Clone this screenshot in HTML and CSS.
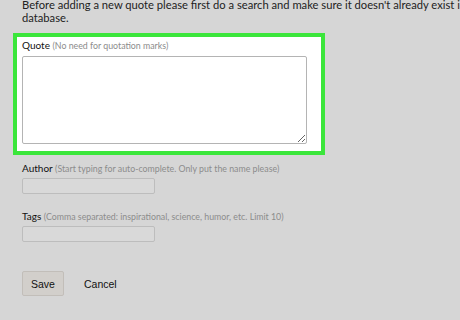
FILE: index.html
```html
<!DOCTYPE html>
<html lang="en">
<head>
    <meta charset="UTF-8">
    <meta name="viewport" content="width=device-width, initial-scale=1.0">
    <title>Add Quote</title>
    <link rel="stylesheet" href="styles.css">
</head>
<body>
    <main class="page">
        <p class="intro">Before adding a new quote please first do a search and make sure it doesn't already exist in the database.</p>
        <form id="quoteForm">
            <div class="highlight">
                <label class="field-label" for="quote">Quote <span class="hint">(No need for quotation marks)</span></label>
                <textarea id="quote" name="quote" class="quote-box"></textarea>
            </div>
            <div class="field">
                <label class="field-label" for="author">Author <span class="hint">(Start typing for auto-complete. Only put the name please)</span></label>
                <input type="text" id="author" name="author" class="text-input">
            </div>
            <div class="field field-tags">
                <label class="field-label" for="tags">Tags <span class="hint">(Comma separated: inspirational, science, humor, etc. Limit 10)</span></label>
                <input type="text" id="tags" name="tags" class="text-input">
            </div>
            <div class="actions">
                <button type="submit" class="save-btn">Save</button>
                <a class="cancel-link">Cancel</a>
            </div>
        </form>
    </main>
</body>
</html>
```

FILE: styles.css
```css
body {
    margin: 0;
    padding: 0;
    background-color: #d6d6d6;
    font-family: Lato, "Open Sans", sans-serif;
    color: #222;
    overflow: hidden;
}
.page {
    padding: 0 0 0 22px;
}
.intro {
    margin: -2px 0 0 0;
    font-size: 11.2px;
    line-height: 13px;
    width: 470px;
}
.highlight {
    margin: 9px 0 0 -9px;
    width: 299px;
    border: 4px solid #3be63b;
    background-color: #fff;
    padding: 2px 0 7px 5px;
}
.field-label {
    display: block;
    font-size: 10px;
    line-height: 12px;
    color: #111;
}
.hint {
    font-size: 8.8px;
    color: #8c8c8c;
}
.quote-box {
    display: block;
    box-sizing: border-box;
    margin-top: 4px;
    width: 285px;
    height: 88px;
    border: 1px solid #b4b4b4;
    border-radius: 2px;
    background-color: #fff;
    padding: 2px;
}
.field {
    margin-top: 7px;
}
.field-tags {
    margin-top: 16px;
}
.text-input {
    display: block;
    box-sizing: border-box;
    margin-top: 3px;
    width: 133px;
    height: 16px;
    border: 1px solid #bdbdbd;
    border-radius: 2px;
    background-color: #d9d9d9;
}
.actions {
    margin-top: 29px;
    display: flex;
    align-items: center;
    gap: 20px;
}
.save-btn {
    width: 42px;
    height: 25px;
    padding: 0;
    font-family: "Liberation Sans", Arial, sans-serif;
    font-size: 10.5px;
    color: #111;
    background-color: #d2cfcb;
    border: 1px solid #c2beb9;
    border-radius: 2px;
}
.cancel-link {
    font-family: "Liberation Sans", Arial, sans-serif;
    font-size: 10.5px;
    color: #111;
    cursor: pointer;
}
```
